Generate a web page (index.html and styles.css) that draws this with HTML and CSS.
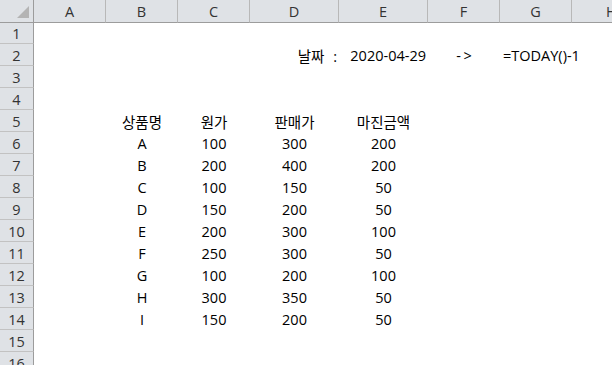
FILE: index.html
```html
<!DOCTYPE html>
<html lang="ko">
<head>
<meta charset="utf-8">
<title>Sheet</title>
<link rel="stylesheet" href="styles.css">
</head>
<body>
<div class="sheet">
  <div class="row head-row">
    <div class="corner"><div class="tri"></div></div>
    <div class="ch">A</div><div class="ch">B</div><div class="ch">C</div><div class="ch">D</div>
    <div class="ch">E</div><div class="ch">F</div><div class="ch">G</div><div class="ch">H</div>
  </div>
  <div class="row first">
    <div class="rh">1</div><div></div><div></div><div></div><div></div><div></div><div></div><div></div><div></div>
  </div>
  <div class="row">
    <div class="rh">2</div><div></div><div></div><div></div>
    <div class="c r label">날짜 :</div><div class="c r">2020-04-29</div><div class="c m arrow">- &gt;</div><div class="c l over">=TODAY()-1</div><div></div>
  </div>
  <div class="row"><div class="rh">3</div><div></div><div></div><div></div><div></div><div></div><div></div><div></div><div></div></div>
  <div class="row"><div class="rh">4</div><div></div><div></div><div></div><div></div><div></div><div></div><div></div><div></div></div>
  <div class="row">
    <div class="rh">5</div><div></div>
    <div class="c m">상품명</div><div class="c m">원가</div><div class="c m">판매가</div><div class="c m">마진금액</div>
    <div></div><div></div><div></div>
  </div>
  <div class="row"><div class="rh">6</div><div></div><div class="c m">A</div><div class="c m">100</div><div class="c m">300</div><div class="c m">200</div><div></div><div></div><div></div></div>
  <div class="row"><div class="rh">7</div><div></div><div class="c m">B</div><div class="c m">200</div><div class="c m">400</div><div class="c m">200</div><div></div><div></div><div></div></div>
  <div class="row"><div class="rh">8</div><div></div><div class="c m">C</div><div class="c m">100</div><div class="c m">150</div><div class="c m">50</div><div></div><div></div><div></div></div>
  <div class="row"><div class="rh">9</div><div></div><div class="c m">D</div><div class="c m">150</div><div class="c m">200</div><div class="c m">50</div><div></div><div></div><div></div></div>
  <div class="row"><div class="rh">10</div><div></div><div class="c m">E</div><div class="c m">200</div><div class="c m">300</div><div class="c m">100</div><div></div><div></div><div></div></div>
  <div class="row"><div class="rh">11</div><div></div><div class="c m">F</div><div class="c m">250</div><div class="c m">300</div><div class="c m">50</div><div></div><div></div><div></div></div>
  <div class="row"><div class="rh">12</div><div></div><div class="c m">G</div><div class="c m">100</div><div class="c m">200</div><div class="c m">100</div><div></div><div></div><div></div></div>
  <div class="row"><div class="rh">13</div><div></div><div class="c m">H</div><div class="c m">300</div><div class="c m">350</div><div class="c m">50</div><div></div><div></div><div></div></div>
  <div class="row"><div class="rh">14</div><div></div><div class="c m">I</div><div class="c m">150</div><div class="c m">200</div><div class="c m">50</div><div></div><div></div><div></div></div>
  <div class="row"><div class="rh">15</div><div></div><div></div><div></div><div></div><div></div><div></div><div></div><div></div></div>
  <div class="row"><div class="rh">16</div><div></div><div></div><div></div><div></div><div></div><div></div><div></div><div></div></div>
</div>
</body>
</html>
```
FILE: styles.css
```css
html, body {
  margin: 0;
  padding: 0;
  background: #ffffff;
  overflow: hidden;
}

.sheet {
  width: 612px;
  height: 365px;
  overflow: hidden;
  font-family: "Open Sans", "Noto Sans CJK KR", sans-serif;
  color: #000;
}

.row {
  display: grid;
  grid-template-columns: 34px 72px 72px 72px 89px 89px 72px 72px 1fr;
  height: 22px;
}

.row.head-row {
  height: 23px;
}

.row.first {
  height: 21px;
}

.corner {
  box-sizing: border-box;
  background: #dfe2e6;
  border-right: 1px solid #9c9c9c;
  border-bottom: 1px solid #9c9c9c;
  display: flex;
  justify-content: flex-end;
  align-items: flex-end;
  padding: 0 4px 4px 0;
}

.tri {
  width: 12px;
  height: 12px;
  background: #b4b4b4;
  clip-path: polygon(100% 0, 100% 100%, 0 100%);
}

.ch {
  box-sizing: border-box;
  background: #dfe2e6;
  border-right: 1px solid #b8b8b8;
  border-bottom: 1px solid #9c9c9c;
  display: flex;
  align-items: center;
  justify-content: center;
  font-size: 14.5px;
  color: #333;
  padding-top: 1px;
}

.ch:last-child {
  border-right: none;
  justify-content: flex-start;
  padding-left: 34px;
}

.rh {
  box-sizing: border-box;
  background: #dfe2e6;
  border-right: 1px solid #9c9c9c;
  border-bottom: 1px solid #c2c2c2;
  display: flex;
  align-items: center;
  justify-content: center;
  font-size: 14.5px;
  color: #333;
  padding-top: 1px;
}

.c {
  display: flex;
  align-items: center;
  font-size: 14.5px;
  white-space: pre;
  padding-top: 1px;
  box-sizing: border-box;
}

.c.m { justify-content: center; }
.c.r { justify-content: flex-end; padding-right: 2px; }
.c.l { justify-content: flex-start; padding-left: 3px; }
.c.over { overflow: visible; }
.c.label { word-spacing: 5px; }
.c.arrow { word-spacing: -1px; }
```
